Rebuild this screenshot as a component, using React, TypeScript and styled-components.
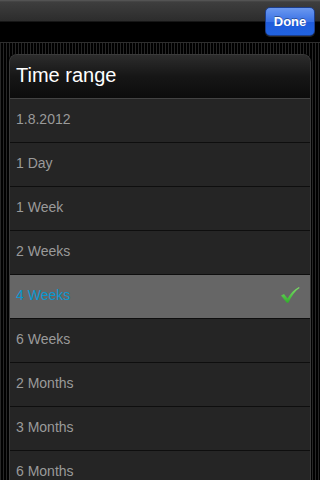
import React from "react";
import styled, { createGlobalStyle } from "styled-components";

const Global = createGlobalStyle`
  html, body { margin: 0; padding: 0; }
  body {
    width: 320px;
    height: 480px;
    overflow: hidden;
    font-family: "Liberation Sans", Arial, sans-serif;
    background-color: #000;
    background-image: repeating-linear-gradient(
      to right,
      #262626 0px, #262626 1px,
      #000 1px, #000 3px
    );
  }
`;

const Screen = styled.div`
  display: flex;
  flex-direction: column;
  width: 320px;
  height: 480px;
  overflow: hidden;
`;

const Toolbar = styled.div`
  height: 42px;
  flex: 0 0 auto;
  display: flex;
  justify-content: flex-end;
  align-items: center;
  padding-right: 5px;
  background: linear-gradient(
    to bottom,
    #5a5a5a 0px,
    #3e3e3e 2px,
    #2c2c2c 21px,
    #000 22px,
    #000 42px
  );
  border-bottom: 1px solid #2e2e2e;
`;

const DoneButton = styled.button`
  width: 50px;
  height: 29px;
  margin-top: 1px;
  border-radius: 5px;
  border: 1px solid #1d3e8a;
  background: linear-gradient(to bottom, #6b98ef 0%, #3a72e6 50%, #1f5bdb 51%, #2163e0 100%);
  color: #fff;
  font-family: "Liberation Sans", Arial, sans-serif;
  font-weight: bold;
  font-size: 13px;
  padding: 0;
  box-shadow: 0 1px 0 rgba(255, 255, 255, 0.15);
  text-shadow: 0 -1px 0 rgba(0, 0, 0, 0.35);
`;

const Content = styled.div`
  flex: 1 1 auto;
  padding: 11px 9px 0 9px;
  display: flex;
  flex-direction: column;
`;

const Panel = styled.div`
  border-radius: 8px 8px 0 0;
  border: 1px solid #3a3a3a;
  border-bottom: none;
  background: #252525;
  overflow: hidden;
  box-shadow: 1px 0 0 #000, -1px 0 0 #000;
`;

const Header = styled.div`
  height: 44px;
  display: flex;
  align-items: center;
  padding: 0 0 2px 6px;
  box-sizing: border-box;
  font-size: 20px;
  color: #fff;
  background: linear-gradient(to bottom, #2c2c2c 0%, #161616 50%, #0c0c0c 100%);
  border-bottom: 1px solid #434343;
`;

const Row = styled.div<{ $selected?: boolean }>`
  height: 43px;
  box-sizing: border-box;
  display: flex;
  align-items: center;
  justify-content: space-between;
  padding: 0 10px 3px 6px;
  border-top: 1px solid #0e0e0e;
  font-size: 14px;
  color: ${(p) => (p.$selected ? "#0a98d0" : "#9a9a9a")};
  background: ${(p) => (p.$selected ? "#666666" : "#252525")};
  &:first-of-type {
    border-top: none;
  }
  & + & {
    height: 44px;
  }
`;

const Check = () => (
  <svg width="20" height="18" viewBox="0 0 20 18">
    <defs>
      <linearGradient id="cg" x1="0" y1="0" x2="0" y2="1">
        <stop offset="0" stopColor="#7ee06a" />
        <stop offset="1" stopColor="#2fae2a" />
      </linearGradient>
    </defs>
    <path
      d="M1 9.5 L4 8 L7.5 12.5 C10.5 7.5 14 3.5 19 1 L19.5 2 C15 5 11.5 10 8.5 16.5 L7 17 Z"
      fill="url(#cg)"
    />
  </svg>
);

const items = [
  "1.8.2012",
  "1 Day",
  "1 Week",
  "2 Weeks",
  "4 Weeks",
  "6 Weeks",
  "2 Months",
  "3 Months",
  "6 Months",
];

export default function App() {
  return (
    <>
      <Global />
      <Screen>
        <Toolbar>
          <DoneButton>Done</DoneButton>
        </Toolbar>
        <Content>
          <Panel>
            <Header>Time range</Header>
            <div>
              {items.map((it) => (
                <Row key={it} $selected={it === "4 Weeks"}>
                  <span>{it}</span>
                  {it === "4 Weeks" && <Check />}
                </Row>
              ))}
            </div>
          </Panel>
        </Content>
      </Screen>
    </>
  );
}
